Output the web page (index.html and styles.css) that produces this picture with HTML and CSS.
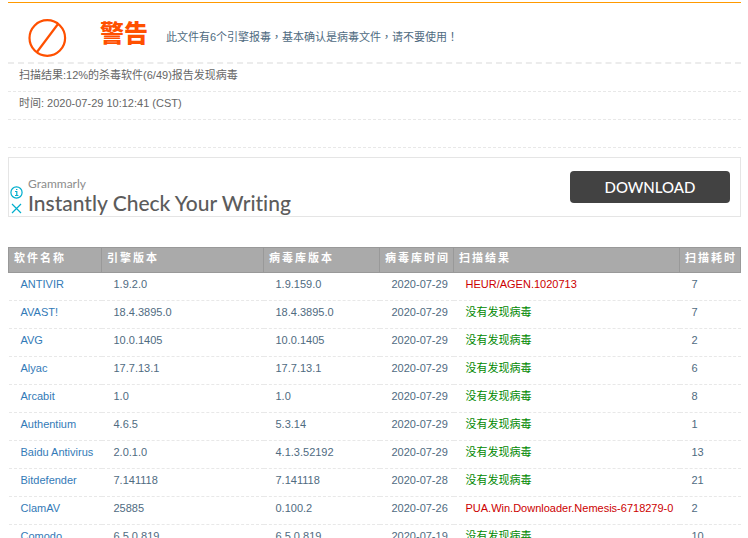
FILE: index.html
```html
<!DOCTYPE html>
<html lang="zh-CN">
<head>
<meta charset="utf-8">
<title>扫描结果</title>
<link rel="stylesheet" href="styles.css">
</head>
<body>
<main class="report">
  <section class="summary">
    <header class="alert">
      <svg class="alert-icon" viewBox="0 0 40 40" aria-hidden="true"><circle cx="20.3" cy="20" r="17.8"/><path d="M31 6L10 34"/></svg>
      <h1 class="alert-title">警告</h1>
      <p class="alert-text" lang="zh-TW">此文件有6个引擎报毒，基本确认是病毒文件，请不要使用！</p>
    </header>
    <p class="line">扫描结果:12%的杀毒软件(6/49)报告发现病毒</p>
    <p class="line">时间: 2020-07-29 10:12:41 (CST)</p>
    <p class="line"></p>
  </section>

  <aside class="banner">
    <div class="banner-tools">
      <button class="tool" type="button" aria-label="Info"><svg viewBox="0 0 13 13"><circle cx="6.5" cy="6.5" r="5.6"/><path d="M5 5.5h1.8v4M5 9.5h3.4"/><path d="M6 3.5h1.4"/></svg></button>
      <button class="tool" type="button" aria-label="Close"><svg viewBox="0 0 13 13"><path d="M2 2l9 9M11 2l-9 9"/></svg></button>
    </div>
    <div class="banner-copy">
      <span class="brand">Grammarly</span>
      <span class="headline">Instantly Check Your Writing</span>
    </div>
    <a class="download" href="#">DOWNLOAD</a>
  </aside>

  <table class="results">
    <colgroup><col class="c-name"><col class="c-engine"><col class="c-db"><col class="c-date"><col class="c-result"><col class="c-time"></colgroup>
    <thead>
      <tr><th>软件名称</th><th>引擎版本</th><th>病毒库版本</th><th>病毒库时间</th><th>扫描结果</th><th>扫描耗时</th></tr>
    </thead>
    <tbody>
      <tr><td><a href="#">ANTIVIR</a></td><td>1.9.2.0</td><td>1.9.159.0</td><td>2020-07-29</td><td class="found">HEUR/AGEN.1020713</td><td>7</td></tr>
      <tr><td><a href="#">AVAST!</a></td><td>18.4.3895.0</td><td>18.4.3895.0</td><td>2020-07-29</td><td class="clean">没有发现病毒</td><td>7</td></tr>
      <tr><td><a href="#">AVG</a></td><td>10.0.1405</td><td>10.0.1405</td><td>2020-07-29</td><td class="clean">没有发现病毒</td><td>2</td></tr>
      <tr><td><a href="#">Alyac</a></td><td>17.7.13.1</td><td>17.7.13.1</td><td>2020-07-29</td><td class="clean">没有发现病毒</td><td>6</td></tr>
      <tr><td><a href="#">Arcabit</a></td><td>1.0</td><td>1.0</td><td>2020-07-29</td><td class="clean">没有发现病毒</td><td>8</td></tr>
      <tr><td><a href="#">Authentium</a></td><td>4.6.5</td><td>5.3.14</td><td>2020-07-29</td><td class="clean">没有发现病毒</td><td>1</td></tr>
      <tr><td><a href="#">Baidu Antivirus</a></td><td>2.0.1.0</td><td>4.1.3.52192</td><td>2020-07-29</td><td class="clean">没有发现病毒</td><td>13</td></tr>
      <tr><td><a href="#">Bitdefender</a></td><td>7.141118</td><td>7.141118</td><td>2020-07-28</td><td class="clean">没有发现病毒</td><td>21</td></tr>
      <tr><td><a href="#">ClamAV</a></td><td>25885</td><td>0.100.2</td><td>2020-07-26</td><td class="found">PUA.Win.Downloader.Nemesis-6718279-0</td><td>2</td></tr>
      <tr><td><a href="#">Comodo</a></td><td>6.5.0.819</td><td>6.5.0.819</td><td>2020-07-19</td><td class="clean">没有发现病毒</td><td>10</td></tr>
    </tbody>
  </table>
</main>
</body>
</html>
```
FILE: styles.css
```css
* { box-sizing: border-box; }

html { overflow: hidden; height: 100%; }

body {
  margin: 0;
  height: 100%;
  overflow: hidden;
  background: #fff;
  color: #4f6b7f;
  font: 11px/16px "Liberation Sans", "Noto Sans CJK TC", sans-serif;
}

h1, p { margin: 0; }

.report { padding: 2px 7px 0 8px; }

.summary { border-top: 1px solid #ff9900; color: #666; }

.alert {
  display: flex;
  align-items: center;
  height: 61px;
  padding: 6px 0 0 19px;
  border-bottom: 2px dashed #ececec;
}

.alert-icon {
  width: 40px;
  height: 40px;
  margin-top: 4px;
  fill: none;
  stroke: #ff5000;
  stroke-width: 2.2;
}

.alert-title {
  margin: 0 0 4px 33px;
  color: #ff5000;
  font-size: 24px;
  font-weight: 900;
  line-height: 32px;
}

.alert-text { margin-left: 18px; padding-top: 2px; color: #4f6b7f; }

.line {
  height: 28px;
  padding: 3px 11px;
  border-bottom: 1px dashed #e8e8e8;
}

.banner {
  display: flex;
  align-items: center;
  height: 60px;
  margin: 9px 0 30px;
  padding: 0 10px 0 1px;
  border: 1px solid #e5e5e5;
}

.banner-tools {
  display: flex;
  flex-direction: column;
  gap: 3px;
  align-self: flex-end;
  padding-bottom: 1px;
}

.tool {
  display: block;
  width: 13px;
  height: 13px;
  padding: 0;
  border: 0;
  background: none;
}

.tool svg {
  display: block;
  fill: none;
  stroke: #00aecd;
  stroke-width: 1.2;
}

.banner-copy {
  display: flex;
  flex-direction: column;
  align-self: flex-end;
  flex: 1;
  padding: 0 0 1px 5px;
  font-family: Lato, sans-serif;
}

.brand { color: #8c8c8c; font-size: 12px; line-height: 13px; }

.headline {
  color: #5c5c5c;
  font-size: 21px;
  font-weight: 500;
  line-height: 25px;
  font-variant-ligatures: none;
}

.download {
  width: 160px;
  border-radius: 4px;
  background: #424242;
  color: #fff;
  font: 500 15px/32px Lato, sans-serif;
  text-align: center;
  text-decoration: none;
}

.results {
  width: 100%;
  table-layout: fixed;
  border-collapse: collapse;
}

.c-name { width: 93px; }
.c-engine { width: 162px; }
.c-db { width: 116px; }
.c-date { width: 74px; }
.c-time { width: 61px; }

th {
  height: 25px;
  padding: 2px 0 6px 5px;
  border: 1px solid #999;
  background: #aaa;
  color: #fff;
  letter-spacing: 2px;
  text-align: left;
  white-space: nowrap;
}

td {
  height: 28px;
  padding: 3px 0 8px 12px;
  border-bottom: 1px dashed #e8e8e8;
  white-space: nowrap;
}

td a { color: #337ab7; text-decoration: none; }

.found { color: #cc0000; }
.clean { color: #008800; }
```
